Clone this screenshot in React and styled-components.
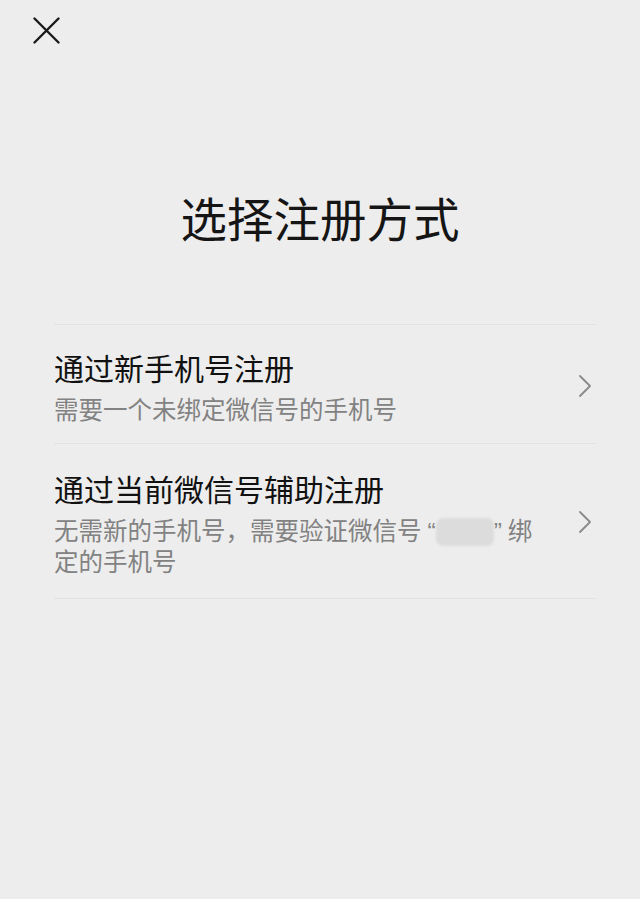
import React from 'react';
import styled, {createGlobalStyle} from 'styled-components';

const GlobalStyle = createGlobalStyle`
  html, body {
    margin: 0;
    padding: 0;
    background: #ededed;
  }

  body {
    font-family: "Noto Sans CJK SC", "Noto Sans", sans-serif;
    -webkit-font-smoothing: antialiased;
  }
`;

const Page = styled.div`
  display: flex;
  flex-direction: column;
  min-height: 899px;
  background: #ededed;
`;

const TopBar = styled.div`
  display: flex;
  align-items: center;
  height: 60px;
  padding-left: 33px;
`;

const CloseButton = styled.button`
  display: flex;
  align-items: center;
  justify-content: center;
  width: 27px;
  height: 27px;
  padding: 0;
  border: none;
  background: transparent;
  color: #1a1a1a;
  cursor: pointer;
`;

const Title = styled.h1`
  margin: 129px 0 0;
  font-size: 46.5px;
  line-height: 56px;
  font-weight: 400;
  color: #151515;
  text-align: center;
`;

const List = styled.div`
  display: flex;
  flex-direction: column;
  margin: 79px 44px 0 54px;
  border-top: 1px solid #e2e2e2;
`;

const Row = styled.div`
  display: flex;
  align-items: center;
  padding: ${({$tall}) => ($tall ? '24px 0 23px' : '22px 0 19px')};
  border-bottom: 1px solid #e2e2e2;
  cursor: pointer;
`;

const RowText = styled.div`
  flex: 1;
  min-width: 0;
  padding-right: 36px;
`;

const RowTitle = styled.div`
  font-size: 30px;
  line-height: 40px;
  font-weight: 400;
  color: #111111;
`;

const RowDesc = styled.div`
  margin-top: 7px;
  font-size: 24.5px;
  line-height: ${({$tall}) => ($tall ? '29px' : '30px')};
  color: #828282;
`;

const Quote = styled.span`
  font-family: "Liberation Sans", sans-serif;
  margin: ${({$open}) => ($open ? '0 0 0 6px' : '0 6px 0 0')};
`;

const Blurred = styled.span`
  display: inline-block;
  width: 52px;
  height: 22px;
  margin: 0 3px;
  vertical-align: -3px;
  border-radius: 4px;
  background: #dcdcdc;
  box-shadow: 0 0 0 3px #dcdcdc;
  filter: blur(1px);
`;

const Chevron = styled.svg`
  flex-shrink: 0;
  width: 14px;
  height: 24px;
  margin-right: 4px;
  color: #8a8a8a;
`;

const CloseIcon = () => (
  <svg width="27" height="27" viewBox="0 0 27 27" fill="none">
    <path
      d="M1.5 1.5 L25.5 25.5 M25.5 1.5 L1.5 25.5"
      stroke="currentColor"
      strokeWidth="2.4"
      strokeLinecap="round"
    />
  </svg>
);

const ArrowRight = () => (
  <Chevron viewBox="0 0 14 24" fill="none">
    <path
      d="M2 2 L12 12 L2 22"
      stroke="currentColor"
      strokeWidth="1.8"
      strokeLinecap="round"
      strokeLinejoin="round"
    />
  </Chevron>
);

const options = [
  {
    id: 'new-phone',
    title: '通过新手机号注册',
    desc: <>需要一个未绑定微信号的手机号</>,
  },
  {
    id: 'current-account',
    title: '通过当前微信号辅助注册',
    tall: true,
    desc: (
      <>
        无需新的手机号，需要验证微信号
        <Quote $open>“</Quote>
        <Blurred />
        <Quote>”</Quote>绑定的手机号
      </>
    ),
  },
];

const App = () => {
  return (
    <>
      <GlobalStyle />
      <Page>
        <TopBar>
          <CloseButton aria-label="关闭">
            <CloseIcon />
          </CloseButton>
        </TopBar>
        <Title>选择注册方式</Title>
        <List>
          {options.map(option => (
            <Row key={option.id} $tall={option.tall}>
              <RowText>
                <RowTitle>{option.title}</RowTitle>
                <RowDesc $tall={option.tall}>{option.desc}</RowDesc>
              </RowText>
              <ArrowRight />
            </Row>
          ))}
        </List>
      </Page>
    </>
  );
};

export default App;
